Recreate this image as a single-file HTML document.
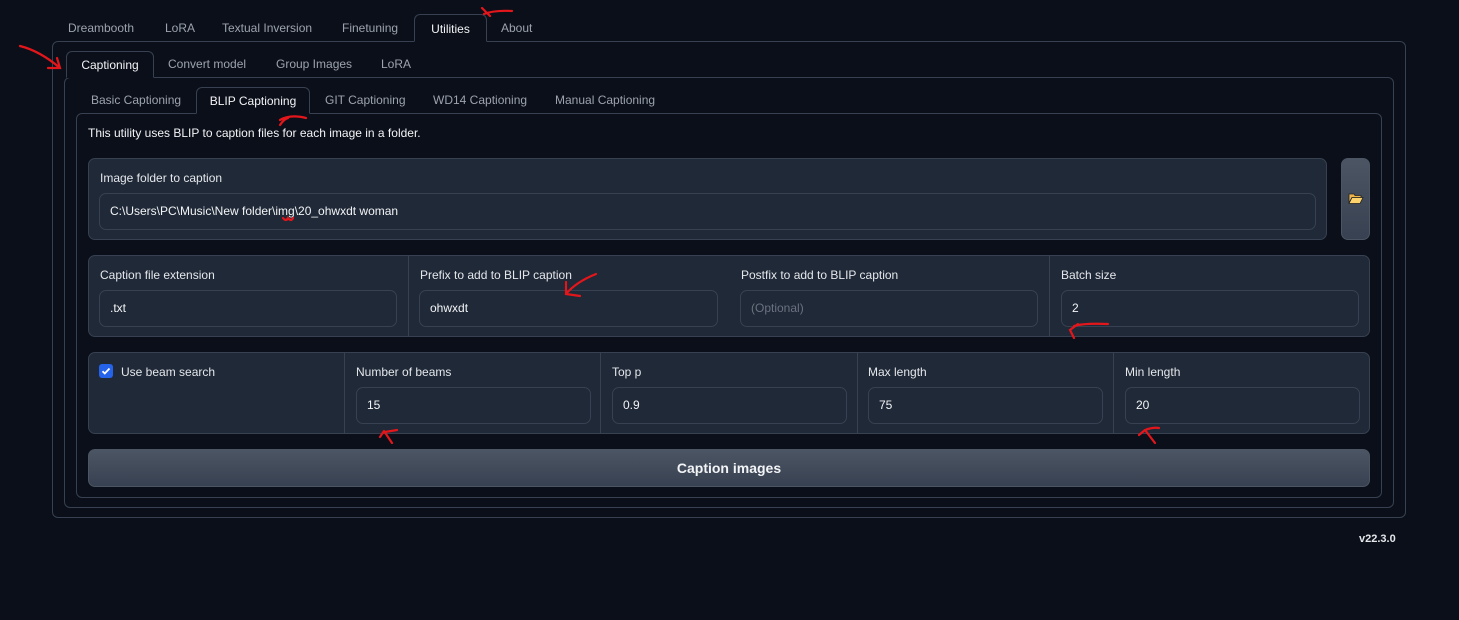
<!DOCTYPE html>
<html><head><meta charset="utf-8"><style>
*{box-sizing:border-box;margin:0;padding:0}
body{width:1459px;height:620px;background:#0b0f19;font-family:"Liberation Sans",sans-serif;font-size:12px;color:#e5e7eb;position:relative;overflow:hidden}
.a{position:absolute}
.tab{position:absolute;color:#9ca3af;white-space:nowrap}
.act{border:1px solid #374151;border-bottom:1px solid #0b0f19;border-radius:6px 6px 0 0;color:#f3f4f6;text-align:center;background:#0b0f19}
.box{position:absolute;border:1px solid #374151;border-radius:6px}
.panel{position:absolute;background:#1f2937;border:1px solid #374151;border-radius:7px}
.lbl{position:absolute;color:#e5e7eb}
.inp{position:absolute;border:1px solid #374151;border-radius:7px;background:#1f2937;padding-left:10px;line-height:35px;color:#f3f4f6}
.div{position:absolute;top:0;bottom:0;width:1px;background:#374151}
</style></head><body>
<div class="box" style="left:52px;top:41px;width:1354px;height:477px"></div>
<div class="tab" style="left:68px;top:21px">Dreambooth</div>
<div class="tab" style="left:165px;top:21px">LoRA</div>
<div class="tab" style="left:222px;top:21px">Textual Inversion</div>
<div class="tab" style="left:342px;top:21px">Finetuning</div>
<div class="tab act" style="left:414px;top:14px;width:73px;height:28px;line-height:28px">Utilities</div>
<div class="tab" style="left:501px;top:21px">About</div>

<div class="box" style="left:64px;top:77px;width:1330px;height:431px"></div>
<div class="tab act" style="left:66px;top:51px;width:88px;height:27px;line-height:26px">Captioning</div>
<div class="tab" style="left:168px;top:57px">Convert model</div>
<div class="tab" style="left:276px;top:57px">Group Images</div>
<div class="tab" style="left:381px;top:57px">LoRA</div>

<div class="box" style="left:76px;top:113px;width:1306px;height:385px"></div>
<div class="tab" style="left:91px;top:93px">Basic Captioning</div>
<div class="tab act" style="left:196px;top:87px;width:114px;height:27px;line-height:26px">BLIP Captioning</div>
<div class="tab" style="left:325px;top:93px">GIT Captioning</div>
<div class="tab" style="left:433px;top:93px">WD14 Captioning</div>
<div class="tab" style="left:555px;top:93px">Manual Captioning</div>

<div class="a" style="left:88px;top:126px;color:#f3f4f6">This utility uses BLIP to caption files for each image in a folder.</div>

<div class="panel" style="left:88px;top:158px;width:1239px;height:82px">
<div class="lbl" style="left:11px;top:12px">Image folder to caption</div>
<div class="inp" style="left:10px;top:34px;width:1217px;height:37px">C:\Users\PC\Music\New folder\img\20_ohwxdt woman</div>
</div>
<div class="a" style="left:1341px;top:158px;width:29px;height:82px;border-radius:7px;background:linear-gradient(#4b5563,#374151);border:1px solid #4b5563"></div>
<svg class="a" style="left:1348px;top:192px" width="16" height="13"><path d="M1 2h5l1 1.5h6v2H4L1 11z" fill="#f0b54a" stroke="#222" stroke-width="0.8"/><path d="M4 5.5h11l-3 6H1z" fill="#ffd36b" stroke="#222" stroke-width="0.8"/></svg>

<div class="panel" style="left:88px;top:255px;width:1282px;height:82px">
<div class="div" style="left:319px"></div><div class="div" style="left:960px"></div>
<div class="lbl" style="left:11px;top:12px">Caption file extension</div>
<div class="inp" style="left:10px;top:34px;width:298px;height:37px">.txt</div>
<div class="lbl" style="left:331px;top:12px">Prefix to add to BLIP caption</div>
<div class="inp" style="left:330px;top:34px;width:299px;height:37px">ohwxdt</div>
<div class="lbl" style="left:652px;top:12px">Postfix to add to BLIP caption</div>
<div class="inp" style="left:651px;top:34px;width:298px;height:37px;color:#6b7280">(Optional)</div>
<div class="lbl" style="left:972px;top:12px">Batch size</div>
<div class="inp" style="left:972px;top:34px;width:298px;height:37px">2</div>
</div>

<div class="panel" style="left:88px;top:352px;width:1282px;height:82px">
<div class="div" style="left:255px"></div><div class="div" style="left:511px"></div><div class="div" style="left:768px"></div><div class="div" style="left:1024px"></div>
<div class="a" style="left:10px;top:11px;width:14px;height:14px;background:#2563eb;border-radius:3px"><svg width="14" height="14"><path d="M3.5 7.2l2.3 2.3 4.7-5" stroke="#fff" stroke-width="1.8" fill="none"/></svg></div>
<div class="lbl" style="left:32px;top:12px">Use beam search</div>
<div class="lbl" style="left:267px;top:12px">Number of beams</div>
<div class="inp" style="left:267px;top:34px;width:235px;height:37px">15</div>
<div class="lbl" style="left:523px;top:12px">Top p</div>
<div class="inp" style="left:523px;top:34px;width:235px;height:37px">0.9</div>
<div class="lbl" style="left:779px;top:12px">Max length</div>
<div class="inp" style="left:779px;top:34px;width:235px;height:37px">75</div>
<div class="lbl" style="left:1036px;top:12px">Min length</div>
<div class="inp" style="left:1036px;top:34px;width:235px;height:37px">20</div>
</div>

<div class="a" style="left:88px;top:449px;width:1282px;height:38px;border-radius:7px;background:linear-gradient(#4b5563,#374151);border:1px solid #4b5563;text-align:center;line-height:36px;font-weight:bold;font-size:14px;color:#f3f4f6">Caption images</div>

<div class="a" style="left:1359px;top:533px;font-size:11px;font-weight:bold;color:#e5e7eb">v22.3.0</div>

<svg class="a" style="left:0;top:0" width="1459" height="620" fill="none" stroke="#e3161b" stroke-width="2.2" stroke-linecap="round">
<path d="M482 8l8 8 M484 14q10-4 28-3"/>
<path d="M20 46q20 5 40 22 M48 68l12 0 -3-10"/>
<path d="M280 125q4-6 8-7 M280 120q10-6 26-2"/>
<path d="M596 274q-20 8-30 20 M566 282l0 12 14 2"/>
<path d="M1074 338l-4-8 8-6 M1074 326q10-3 34-2"/>
<path d="M392 443l-8-12 M384 431l-4 6 M385 432l12-2"/>
<path d="M1155 443l-10-13 M1145 430l-6 5 M1145 430q8-3 14-2"/>
<path d="M283 218q3 4 5 0q3 4 5 0"/>
</svg>
</body></html>
